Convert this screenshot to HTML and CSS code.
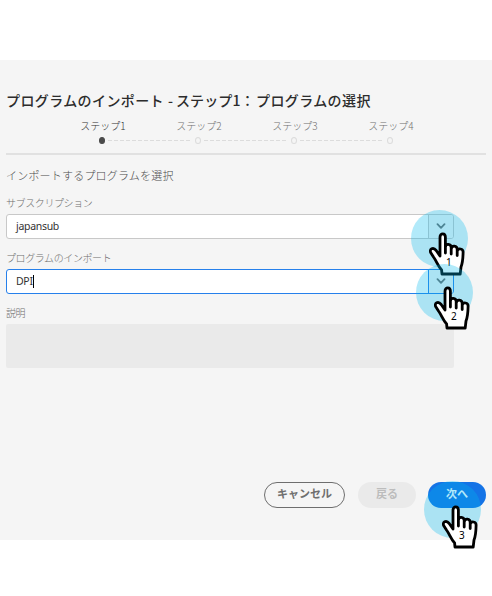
FILE: index.html
```
<!DOCTYPE html>
<html lang="ja">
<head>
<meta charset="utf-8">
<title>プログラムのインポート</title>
<link rel="stylesheet" href="styles.css">
</head>
<body>
<svg class="defs" width="0" height="0" aria-hidden="true">
  <symbol id="hand" viewBox="0 0 37 44">
    <path d="M11 24V5.2C11 .8 16.4 .8 16.4 5.2V15C16.8 11.2 22 11.7 22.2 15.5V17C22.8 12.8 28.2 13.5 28.2 17.5V19.2C29.2 15.6 34.4 16.5 34.1 20.5C34 26 33.6 31 32 35L31.2 42H13L12.6 38C8.6 33.5 7.5 29 4.5 25L1.8 20.8C-.2 17 4.2 14.8 7.2 18.5L11 24M16.4 14V21M22.2 15V22M28.2 17V23.5" fill="#fff" stroke="#000" stroke-width="2.8" stroke-linejoin="round" stroke-linecap="round"/>
  </symbol>
  <symbol id="chevron" viewBox="0 0 10 7"><path d="M1.5 1.2L5 4.8L8.5 1.2" fill="none" stroke="currentColor" stroke-width="1.8" stroke-linecap="round" stroke-linejoin="round"/></symbol>
</svg>
<main class="dialog">
  <h1 class="title"><span class="t1">プログラムのインポート</span><span class="t2">-</span><span class="t3">ステップ1：</span><span class="t4">プログラムの選択</span></h1>
  <ol class="steps">
    <li class="step active"><span class="label">ステップ1</span><i class="dot"></i></li>
    <li class="step"><span class="label">ステップ2</span><i class="dot"></i></li>
    <li class="step"><span class="label">ステップ3</span><i class="dot"></i></li>
    <li class="step"><span class="label">ステップ4</span><i class="dot"></i></li>
  </ol>
  <hr class="rule">
  <h2 class="heading">インポートするプログラムを選択</h2>
  <div class="name n1">サブスクリプション</div>
  <div class="combo"><span class="value">japansub</span><span class="arrow"><svg width="10" height="7"><use href="#chevron"/></svg></span></div>
  <div class="name n2">プログラムのインポート</div>
  <div class="combo focus"><span class="value">DPI<i class="caret"></i></span><span class="arrow"><svg width="10" height="7"><use href="#chevron"/></svg></span></div>
  <div class="name n3">説明</div>
  <div class="description"></div>
  <div class="actions">
    <button class="btn cancel">キャンセル</button>
    <button class="btn back">戻る</button>
    <button class="btn next">次へ</button>
  </div>
</main>
<div class="pointer p1"><svg class="hand" width="37" height="44"><use href="#hand"/></svg><b>1</b></div>
<div class="pointer p2"><svg class="hand" width="37" height="44"><use href="#hand"/></svg><b>2</b></div>
<div class="pointer p3"><svg class="hand" width="37" height="44"><use href="#hand"/></svg><b>3</b></div>
</body>
</html>
```
FILE: styles.css
```
* { box-sizing: border-box; }
body {
  margin: 0;
  padding-top: 60px;
  background: #fff;
  color: #4b4b4b;
  font-family: "Open Sans", "Noto Sans CJK JP", sans-serif;
  position: relative;
  height: 596px;
  overflow: hidden;
}
.defs { position: absolute; }
.dialog {
  height: 480px;
  padding: 29px 6px 0;
  background: #f5f5f5;
  display: flex;
  flex-direction: column;
}
.title {
  margin: 0;
  height: 22px;
  display: flex;
  font: 500 14px/22px "Noto Sans CJK JP", sans-serif;
  color: #2c2c2c;
  white-space: nowrap;
}
.t1 { width: 162px; letter-spacing: .4px; }
.t2 { width: 8px; }
.t3 { width: 80px; letter-spacing: .1px; }
.t4 { letter-spacing: .4px; }
.steps {
  list-style: none;
  margin: 7px 0 0;
  padding: 0 0 0 48px;
  height: 35px;
  display: flex;
}
.step {
  width: 96px;
  display: flex;
  flex-direction: column;
  align-items: center;
  position: relative;
}
.label { font: 300 10px/16px "Noto Sans CJK JP", sans-serif; color: #6e6e6e; white-space: nowrap; position: relative; left: 1px; }
.active .label { color: #333; }
.dot {
  width: 6px;
  height: 7px;
  margin-top: 3px;
  border: 1px solid #dcdcdc;
  border-radius: 50%;
}
.active .dot { background: #4b4b4b; border-color: #4b4b4b; }
.step:not(:last-child)::after {
  content: "";
  position: absolute;
  left: 54px;
  top: 22px;
  width: 84px;
  height: 1px;
  background: repeating-linear-gradient(90deg, #dcdcdc 0 4px, transparent 4px 6px);
}
.rule { margin: 0; width: 480px; height: 2px; border: 0; background: #e1e1e1; flex: none; }
.heading { margin: 10px 0 0; font: 300 11px/20px "Noto Sans CJK JP", sans-serif; letter-spacing: .2px; height: 20px; }
.name { font: 300 10px/16px "Noto Sans CJK JP", sans-serif; height: 16px; color: #6e6e6e; letter-spacing: -.4px; }
.n1 { margin-top: 10px; }
.n2 { margin-top: 11px; }
.n3 { margin-top: 11px; }
.combo {
  width: 448px;
  height: 25px;
  margin-top: 3px;
  flex: none;
  display: flex;
  background: #fff;
  border: 1px solid #c8c8c8;
  border-radius: 3px;
}
.value { flex: 1; padding: 0 0 1px 9px; font: 10.5px/22px "Noto Sans", sans-serif; letter-spacing: -.3px; color: #323232; display: flex; align-items: center; }
.caret { width: 1px; height: 13px; background: #000; }
.arrow {
  width: 25px;
  border-left: 1px solid #c8c8c8;
  background: #f5f5f5;
  color: #6e6e6e;
  border-radius: 0 2px 2px 0;
  display: flex;
  align-items: center;
  justify-content: center;
}
.focus, .focus .arrow { border-color: #2680eb; }
.description { width: 448px; height: 44px; margin-top: 3px; background: #eaeaea; border-radius: 2px; flex: none; }
.actions { display: flex; gap: 12px; justify-content: flex-end; margin-top: 114px; }
.btn {
  height: 26px;
  padding: 0 0 4px;
  border: 0;
  border-radius: 13px;
  font: 700 11px/20px "Noto Sans CJK JP", sans-serif;
}
.cancel { width: 81px; border: 1px solid #6e6e6e; background: transparent; color: #6e6e6e; margin-right: 1px; }
.back { width: 58px; background: #eaeaea; color: #bcbcbc; }
.next { width: 58px; background: #1473e6; color: #fff; }
.pointer {
  position: absolute;
  width: 57px;
  height: 57px;
  border-radius: 50%;
  background: rgba(0, 184, 240, .3);
}
.hand { position: absolute; left: 18px; top: 22px; }
.pointer b { position: absolute; left: 35px; top: 45px; font: 10px/14px "Noto Sans", sans-serif; color: #000; }
.p1 { left: 411px; top: 210px; }
.p2 { left: 416px; top: 264px; }
.p3 { left: 424px; top: 481px; }
.p3 .hand { top: 24px; }
.p3 b { top: 47px; }
```
